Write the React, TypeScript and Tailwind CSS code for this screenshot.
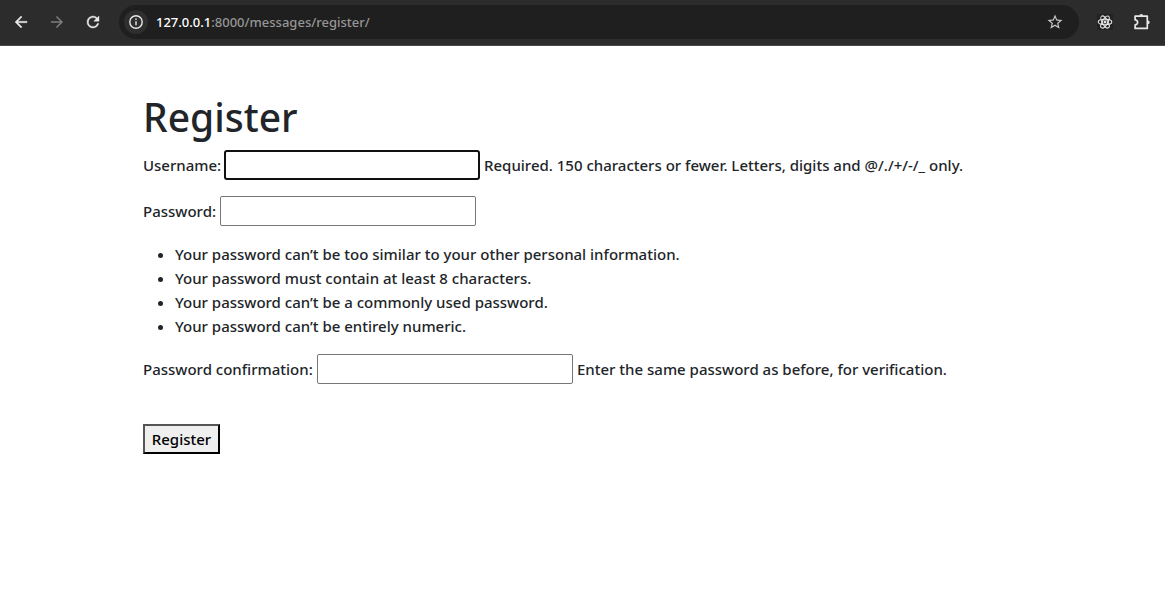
import React from "react";

const passwordRules = [
  "Your password can’t be too similar to your other personal information.",
  "Your password must contain at least 8 characters.",
  "Your password can’t be a commonly used password.",
  "Your password can’t be entirely numeric.",
];

function BrowserBar() {
  return (
    <header className="flex h-[46px] items-center border-b border-[#4a4a4a] bg-[#2c2c2c] pr-[14px] pb-px pl-3 text-[#e8e8e8]">
      <button type="button" aria-label="Back" className="flex size-[18px] items-center justify-center">
        <svg viewBox="0 0 24 24" className="size-[18px]" fill="currentColor" stroke="currentColor" strokeWidth="0.5">
          <path d="M20 11H7.83l5.59-5.59L12 4l-8 8 8 8 1.41-1.41L7.83 13H20z" />
        </svg>
      </button>
      <button type="button" aria-label="Forward" className="ml-[18px] flex size-[18px] items-center justify-center text-[#7d7d7d]">
        <svg viewBox="0 0 24 24" className="size-[18px]" fill="currentColor">
          <path d="M12 4l-1.41 1.41L16.17 11H4v2h12.17l-5.58 5.59L12 20l8-8z" />
        </svg>
      </button>
      <button type="button" aria-label="Reload" className="ml-[18px] flex size-[18px] items-center justify-center">
        <svg viewBox="0 0 24 24" className="size-[18px]" fill="currentColor" stroke="currentColor" strokeWidth="0.5">
          <path d="M17.65 6.35A7.96 7.96 0 0 0 12 4a8 8 0 1 0 7.73 10h-2.08A6 6 0 1 1 12 6c1.66 0 3.14.69 4.22 1.78L13 11h7V4z" />
        </svg>
      </button>
      <div className="ml-[17px] flex h-[34px] min-w-0 flex-1 items-center rounded-full bg-[#1f1f1f] pr-4 pl-[5px]">
        <button type="button" aria-label="Site information" className="flex size-6 shrink-0 items-center justify-center rounded-full bg-[#2f2f2f]">
          <svg viewBox="0 0 16 16" className="size-4" fill="none" stroke="currentColor" strokeWidth="1.4">
            <circle cx="8" cy="8" r="6.2" />
            <path d="M8 7.2v4M8 4.6v1.5" />
          </svg>
        </button>
        <p className="ml-2 flex-1 truncate text-[13px] leading-5 font-medium text-[#969696]">
          <span className="text-white">127.0.0.1</span>:8000/messages/register/
        </p>
        <button type="button" aria-label="Bookmark this page" className="flex size-4 items-center justify-center text-[#c7c7c7]">
          <svg viewBox="0 0 24 24" className="size-[18px] shrink-0" fill="currentColor">
            <path d="M22 9.24l-7.19-.62L12 2 9.19 8.63 2 9.24l5.46 4.73L5.82 21 12 17.27 18.18 21l-1.63-7.03zM12 15.4l-3.76 2.27 1-4.28-3.32-2.88 4.38-.38L12 6.1l1.71 4.04 4.38.38-3.32 2.88 1 4.28z" />
          </svg>
        </button>
      </div>
      <button type="button" aria-label="React Developer Tools" className="ml-[18px] flex size-4 items-center justify-center bg-[#222222]">
        <svg viewBox="0 0 16 16" className="size-4" fill="none" stroke="currentColor" strokeWidth="1.1">
          <ellipse cx="8" cy="8" rx="6.8" ry="2.7" />
          <ellipse cx="8" cy="8" rx="6.8" ry="2.7" transform="rotate(60 8 8)" />
          <ellipse cx="8" cy="8" rx="6.8" ry="2.7" transform="rotate(120 8 8)" />
          <circle cx="8" cy="8" r="1.4" fill="currentColor" stroke="none" />
        </svg>
      </button>
      <button type="button" aria-label="Extensions" className="ml-5 flex size-[18px] items-center justify-center">
        <svg viewBox="0 0 18 18" className="size-[18px]" fill="none" stroke="currentColor" strokeWidth="1.7" strokeLinejoin="round">
          <path d="M2.1 3.2h12.2v12.2H2.1v-3.5a2.5 2.5 0 0 0 0-5.1z" />
          <path d="M6.4 2.8a1.9 1.9 0 0 1 3.8 0zM14.8 7.4a1.9 1.9 0 0 1 0 3.8z" fill="currentColor" stroke="none" />
        </svg>
      </button>
    </header>
  );
}

export default function App() {
  return (
    <div className="min-h-screen bg-white font-['Noto_Sans',sans-serif] text-[15px] leading-6 text-[#212529]">
      <BrowserBar />
      <main className="mx-auto max-w-[879px] pt-[47px] font-medium">
        <h1 className="mb-[9px] text-[39px] leading-[48px] font-medium">Register</h1>
        <form onSubmit={(event) => event.preventDefault()}>
          <div className="mb-4 flex items-center gap-1">
            <label htmlFor="username" className="w-[77px] shrink-0 whitespace-nowrap">Username:</label>
            <input id="username" type="text" className="h-[30px] w-64 rounded-[3px] border-2 border-[#101010] bg-white px-1 outline-none" />
            <span className="whitespace-nowrap">Required. 150 characters or fewer. Letters, digits and @/./+/-/_ only.</span>
          </div>
          <div className="mb-4 flex items-center gap-1">
            <label htmlFor="password" className="w-[73px] shrink-0 whitespace-nowrap">Password:</label>
            <input id="password" type="password" className="h-[30px] w-64 rounded-[2px] border border-[#767676] bg-white px-1 outline-none" />
          </div>
          <ul className="mb-4 list-disc pl-8">
            {passwordRules.map((rule) => (
              <li key={rule}>{rule}</li>
            ))}
          </ul>
          <div className="mb-10 flex items-center gap-1">
            <label htmlFor="confirmation" className="w-[170px] shrink-0 whitespace-nowrap">Password confirmation:</label>
            <input id="confirmation" type="password" className="h-[30px] w-64 rounded-[2px] border border-[#767676] bg-white px-1 outline-none" />
            <span className="whitespace-nowrap">Enter the same password as before, for verification.</span>
          </div>
          <button type="submit" className="flex h-[30px] w-[77px] items-center justify-center border-2 border-t-[#555555] border-r-black border-b-black border-l-[#555555] bg-[#efefef] text-black">
            Register
          </button>
        </form>
      </main>
    </div>
  );
}
